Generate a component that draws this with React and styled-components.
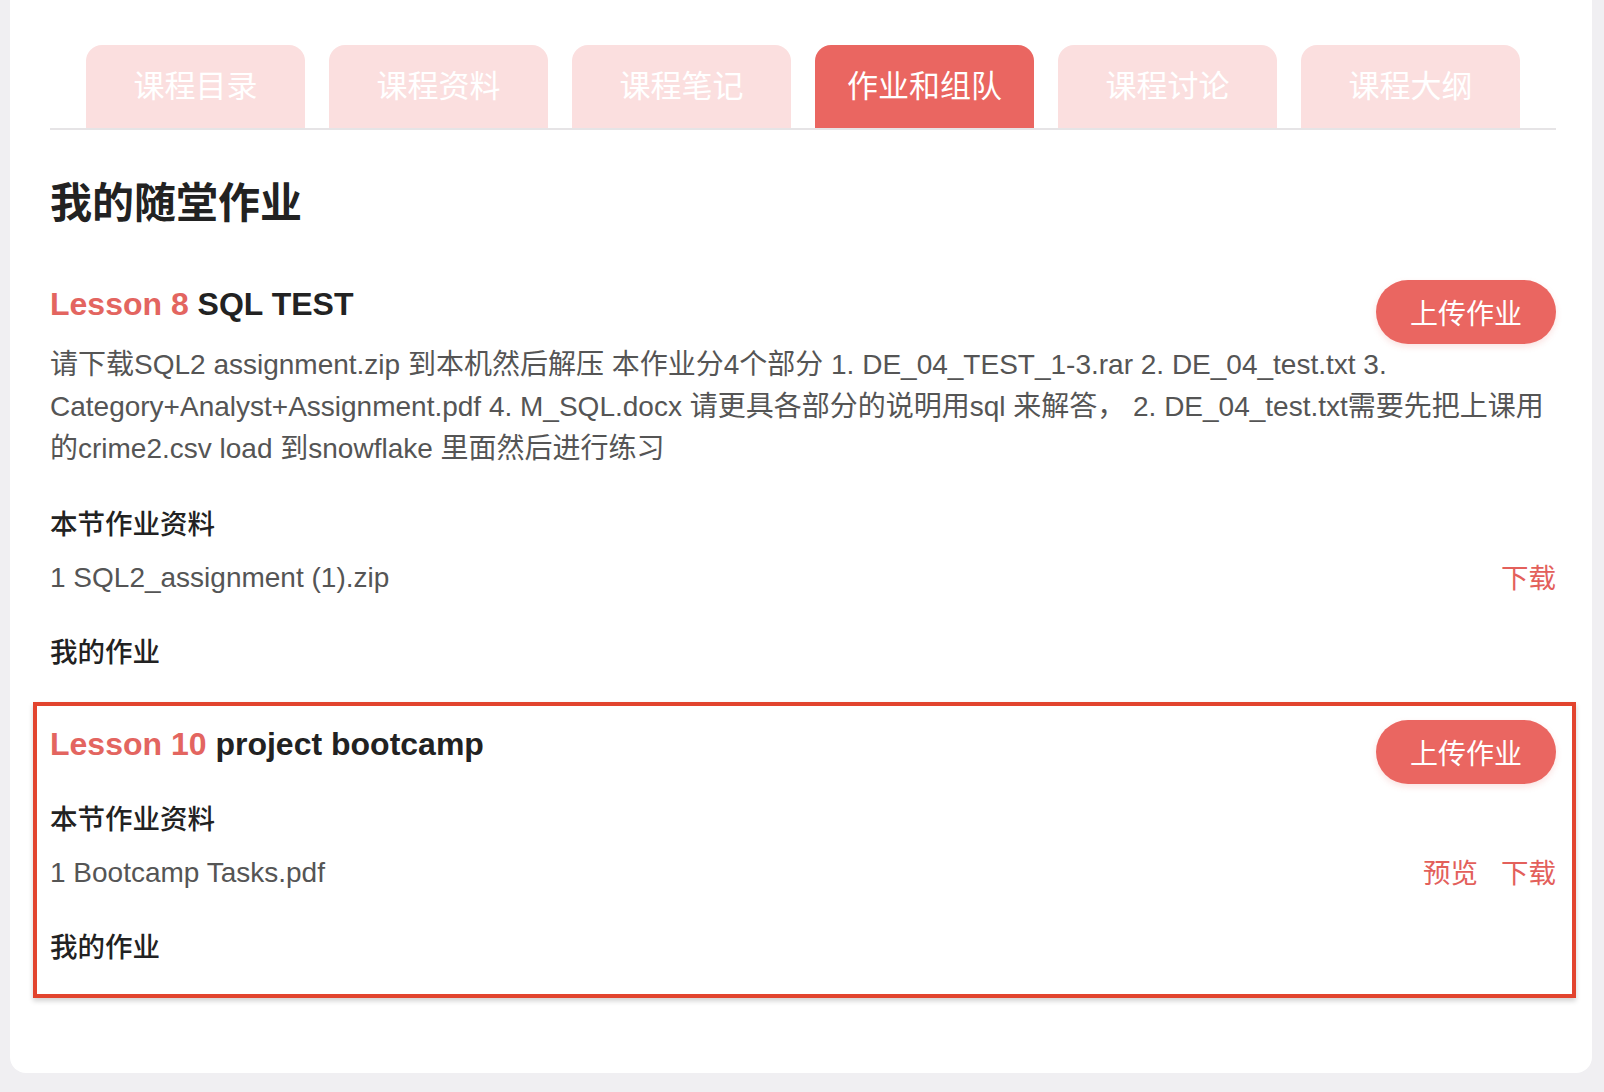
import React from "react";
import styled, { createGlobalStyle } from "styled-components";

const Global = createGlobalStyle`
  html, body { margin: 0; padding: 0; }
  body {
    background: #f0eff2;
    font-family: "Liberation Sans", "Noto Sans CJK SC", sans-serif;
    color: #222;
  }
`;

const Page = styled.div`
  padding: 0 12px 20px 10px;
  min-height: 1092px;
  box-sizing: border-box;
`;

const Card = styled.div`
  background: #fff;
  border-radius: 0 0 16px 16px;
  padding: 45px 36px 75px 40px;
`;

const TabBar = styled.div`
  display: flex;
  gap: 24px;
  padding-left: 36px;
  border-bottom: 2px solid #e6e4e6;
`;

const Tab = styled.div`
  width: 219px;
  height: 83px;
  box-sizing: border-box;
  padding-bottom: 7px;
  border-radius: 16px 16px 0 0;
  background: ${(p) => (p.$active ? "#ea6661" : "#fbdfdf")};
  color: #fff;
  font-size: 31px;
  display: flex;
  align-items: center;
  justify-content: center;
  font-family: "Noto Sans CJK SC", sans-serif;
  font-weight: 400;
`;

const PageTitle = styled.h1`
  margin: 42px 0 52px;
  font-size: 42px;
  line-height: 56px;
  font-weight: 700;
  color: #222;
  font-family: "Noto Sans CJK SC", sans-serif;
`;

const Lesson = styled.section`
  display: flex;
  flex-direction: column;
  ${(p) =>
    p.$highlight
      ? `
    margin: 31px -20px 0 -17px;
    padding: 14px 16px 28px 13px;
    border: 4px solid #e2442e;
    box-shadow: 0 3px 5px rgba(0,0,0,0.18);
  `
      : ""}
`;

const Header = styled.div`
  display: flex;
  justify-content: space-between;
  align-items: flex-start;
`;

const LessonTitle = styled.h2`
  margin: 0;
  font-size: 32px;
  line-height: 48px;
  font-weight: 700;
  color: #222;
`;

const LessonNo = styled.span`
  color: #e36560;
`;

const UploadButton = styled.button`
  width: 180px;
  height: 64px;
  border: none;
  border-radius: 32px;
  background: #ea6661;
  color: #fff;
  font-size: 28px;
  font-family: "Noto Sans CJK SC", sans-serif;
  box-shadow: 0 3px 6px rgba(234, 102, 97, 0.18);
  cursor: pointer;
`;

const Desc = styled.p`
  margin: 0 0 19px;
  font-size: 28px;
  line-height: 42px;
  color: #555;
  white-space: nowrap;
`;

const SubHead = styled.h3`
  margin: 12px 0 0;
  font-size: 27.5px;
  line-height: 42px;
  font-weight: 500;
  color: #222;
  font-family: "Noto Sans CJK SC", sans-serif;
`;

const FileRow = styled.div`
  margin-top: 14px;
  display: flex;
  justify-content: space-between;
  align-items: center;
  font-size: 28px;
  line-height: 42px;
  color: #555;
`;

const Actions = styled.div`
  display: flex;
  gap: 23px;
  margin-top: -4px;
`;

const ActionLink = styled.a`
  color: #e3605b;
  font-family: "Noto Sans CJK SC", sans-serif;
  font-size: 27.5px;
  text-decoration: none;
  cursor: pointer;
`;

const MyWork = styled(SubHead)`
  margin-top: 30px;
`;

const tabs = ["课程目录", "课程资料", "课程笔记", "作业和组队", "课程讨论", "课程大纲"];

const lessons = [
  {
    no: "Lesson 8",
    name: "SQL TEST",
    desc: [
      "请下载SQL2 assignment.zip 到本机然后解压 本作业分4个部分 1. DE_04_TEST_1-3.rar 2. DE_04_test.txt 3.",
      "Category+Analyst+Assignment.pdf 4. M_SQL.docx 请更具各部分的说明用sql 来解答， 2. DE_04_test.txt需要先把上课用",
      "的crime2.csv load 到snowflake 里面然后进行练习",
    ],
    files: [{ name: "1 SQL2_assignment (1).zip", actions: ["下载"] }],
  },
  {
    no: "Lesson 10",
    name: "project bootcamp",
    highlight: true,
    files: [{ name: "1 Bootcamp Tasks.pdf", actions: ["预览", "下载"] }],
  },
];

export default function App() {
  return (
    <>
      <Global />
      <Page>
        <Card>
          <TabBar>
            {tabs.map((t) => (
              <Tab key={t} $active={t === "作业和组队"}>
                {t}
              </Tab>
            ))}
          </TabBar>
          <PageTitle>我的随堂作业</PageTitle>
          {lessons.map((l) => (
            <Lesson key={l.no} $highlight={l.highlight}>
              <Header>
                <LessonTitle>
                  <LessonNo>{l.no}</LessonNo> {l.name}
                </LessonTitle>
                <UploadButton>上传作业</UploadButton>
              </Header>
              {l.desc && (
                <Desc>
                  {l.desc.map((line, i) => (
                    <React.Fragment key={i}>
                      {line}
                      {i < l.desc.length - 1 && <br />}
                    </React.Fragment>
                  ))}
                </Desc>
              )}
              <SubHead>本节作业资料</SubHead>
              {l.files.map((f) => (
                <FileRow key={f.name}>
                  <span>{f.name}</span>
                  <Actions>
                    {f.actions.map((a) => (
                      <ActionLink key={a}>{a}</ActionLink>
                    ))}
                  </Actions>
                </FileRow>
              ))}
              <MyWork>我的作业</MyWork>
            </Lesson>
          ))}
        </Card>
      </Page>
    </>
  );
}
